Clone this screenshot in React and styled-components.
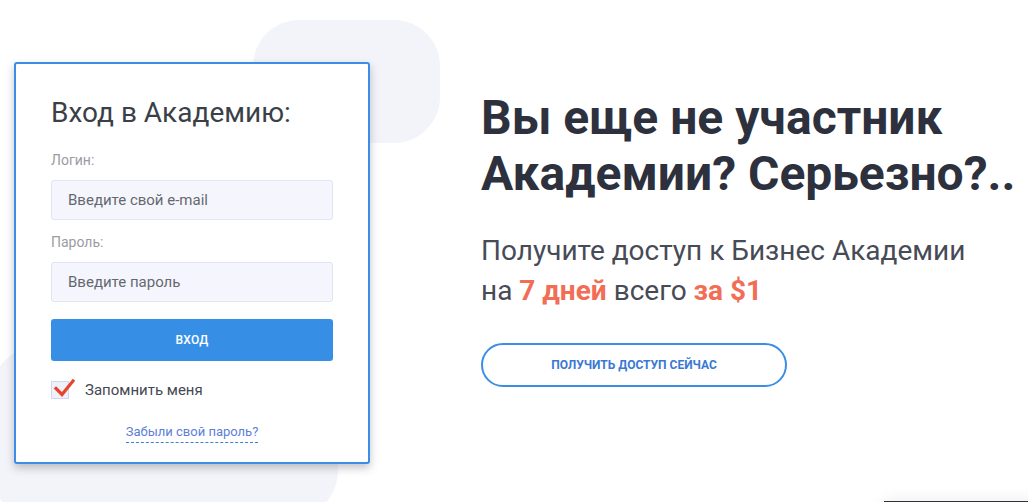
import React from 'react';
import styled, { createGlobalStyle } from 'styled-components';

const GlobalStyle = createGlobalStyle`
  html, body {
    margin: 0;
    padding: 0;
    background: #ffffff;
    overflow: hidden;
  }
  body {
    font-family: Roboto, "Liberation Sans", Arial, sans-serif;
  }
  #root {
    height: 502px;
  }
  * {
    box-sizing: border-box;
  }
`;

const Page = styled.div`
  position: relative;
  height: 502px;
  overflow: hidden;
  display: flex;
  align-items: flex-start;
  padding: 62px 0 0 14px;
`;

// decorative background blobs
const Blob = styled.div`
  position: absolute;
  left: ${p => p.left}px;
  top: ${p => p.top}px;
  width: ${p => p.w}px;
  height: ${p => p.h}px;
  border-radius: ${p => p.r}px;
  background: #f3f4f9;
  z-index: 0;
`;

const BottomBar = styled.div`
  position: absolute;
  left: 884px;
  top: 501px;
  width: 160px;
  height: 20px;
  background: #2d313e;
  box-shadow: 0 0 18px rgba(0, 0, 0, 0.08);
`;

const Card = styled.form`
  position: relative;
  z-index: 1;
  width: 356px;
  height: 402px;
  background: #fff;
  border: 2px solid #3a8ee6;
  border-radius: 3px;
  box-shadow: 0 4px 8px rgba(40, 44, 60, 0.28);
  padding: 34px 35px 0 35px;
  display: flex;
  flex-direction: column;
`;

const CardTitle = styled.h2`
  margin: 0 0 24px;
  font-size: 28px;
  line-height: 30px;
  font-weight: 400;
  color: #3b3f48;
`;

const Label = styled.label`
  display: block;
  font-size: 14px;
  line-height: 16px;
  color: #9a9ca3;
  margin: 0 0 12px;
`;

const Input = styled.input`
  display: block;
  width: 282px;
  height: 40px;
  margin: 0 0 ${p => p.gap}px;
  padding: 0 16px;
  border: 1px solid #e2e4f3;
  border-radius: 3px;
  background: #f5f6fd;
  font-family: Roboto, "Liberation Sans", Arial, sans-serif;
  font-size: 15px;
  color: #555;
  outline: none;

  &::placeholder {
    color: #66686f;
  }
`;

const SubmitButton = styled.button`
  width: 282px;
  height: 42px;
  border: none;
  border-radius: 3px;
  background: #378fe5;
  color: #fff;
  font-family: Roboto, "Liberation Sans", Arial, sans-serif;
  font-size: 12px;
  font-weight: 500;
  letter-spacing: 0.2px;
  text-transform: uppercase;
  cursor: pointer;
`;

const RememberRow = styled.div`
  display: flex;
  align-items: center;
  gap: 16px;
  margin-top: 20px;
  height: 18px;
`;

const CheckBox = styled.span`
  position: relative;
  width: 18px;
  height: 18px;
  border: 1px solid #d3d6ef;
  background: #eef0fb;
  flex-shrink: 0;

  svg {
    position: absolute;
    left: 1px;
    top: -4px;
  }
`;

const RememberText = styled.span`
  font-size: 15px;
  color: #444852;
`;

const LinkRow = styled.div`
  display: flex;
  justify-content: center;
  margin-top: 25px;
`;

const ForgotLink = styled.a`
  font-size: 13px;
  line-height: 16px;
  color: #5c7fd8;
  text-decoration: none;
  border-bottom: 1px dashed #3a7fd9;
  padding-bottom: 2px;
  cursor: pointer;
`;

const Promo = styled.section`
  position: relative;
  z-index: 1;
  margin-left: 111px;
  padding-top: 28px;
  display: flex;
  flex-direction: column;
  align-items: flex-start;
`;

const Heading = styled.h1`
  margin: 0 0 29px;
  font-size: 48px;
  line-height: 56px;
  font-weight: 700;
  color: #2d313e;
  white-space: nowrap;
`;

const Lead = styled.p`
  margin: 0 0 32px;
  font-size: 28px;
  line-height: 40px;
  font-weight: 400;
  color: #474b56;
  white-space: nowrap;
`;

const Accent = styled.b`
  font-weight: 700;
  color: #f26d55;
`;

const OutlineButton = styled.button`
  width: 306px;
  height: 44px;
  border: 2px solid #3a8ee6;
  border-radius: 22px;
  background: #fff;
  color: #3a78d4;
  font-family: Roboto, "Liberation Sans", Arial, sans-serif;
  font-size: 12px;
  font-weight: 700;
  text-transform: uppercase;
  cursor: pointer;
`;

function CheckMark() {
  return (
    <svg width="22" height="20" viewBox="0 0 22 20">
      <path d="M3 10.5 L9 16.5 L20 3" fill="none" stroke="#e8442c" strokeWidth="3.2" strokeLinecap="square" />
    </svg>
  );
}

export default function App() {
  return (
    <>
      <GlobalStyle />
      <Page>
        <Blob left={253} top={20} w={187} h={123} r={46} />
        <Blob left={-9} top={345} w={347} h={175} r={50} />
        <BottomBar />

        <Card onSubmit={e => e.preventDefault()}>
          <CardTitle>Вход в Академию:</CardTitle>
          <Label>Логин:</Label>
          <Input type="email" placeholder="Введите свой e-mail" gap={14} />
          <Label>Пароль:</Label>
          <Input type="password" placeholder="Введите пароль" gap={17} />
          <SubmitButton type="submit">Вход</SubmitButton>
          <RememberRow>
            <CheckBox><CheckMark /></CheckBox>
            <RememberText>Запомнить меня</RememberText>
          </RememberRow>
          <LinkRow>
            <ForgotLink>Забыли свой пароль?</ForgotLink>
          </LinkRow>
        </Card>

        <Promo>
          <Heading>
            Вы еще не участник<br />
            Академии? Серьезно?..
          </Heading>
          <Lead>
            Получите доступ к Бизнес Академии<br />
            на <Accent>7 дней</Accent> всего <Accent>за $1</Accent>
          </Lead>
          <OutlineButton type="button">Получить доступ сейчас</OutlineButton>
        </Promo>
      </Page>
    </>
  );
}
